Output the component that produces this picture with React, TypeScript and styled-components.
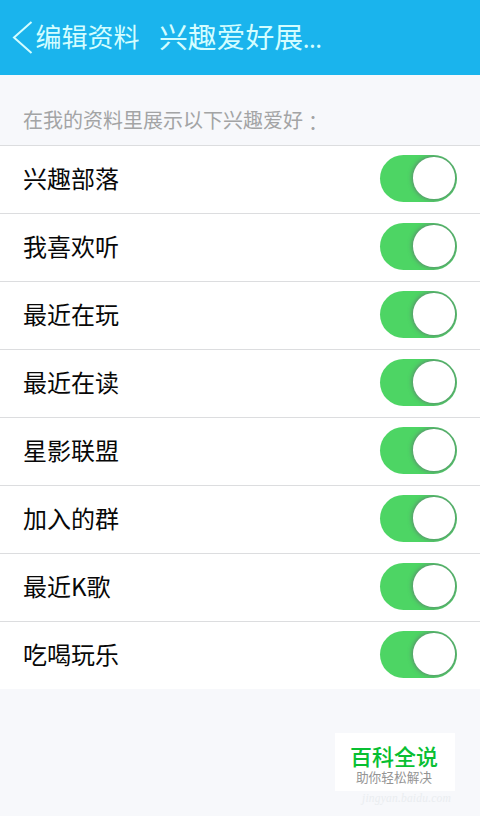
import React, { useState } from "react";
import styled, { createGlobalStyle } from "styled-components";

const GlobalStyle = createGlobalStyle`
  * { box-sizing: border-box; }
  body {
    margin: 0;
    background: #f7f8fb;
    font-family: "Noto Sans CJK SC", "Noto Sans", sans-serif;
  }
`;

const Page = styled.div`
  display: flex;
  flex-direction: column;
  width: 100%;
  height: 816px;
  overflow: hidden;
  background: #f7f8fb;
`;

const Header = styled.header`
  display: flex;
  align-items: center;
  flex: none;
  height: 75px;
  padding-left: 12px;
  background: #1ab4ed;
  color: #d3fdff;
  white-space: nowrap;
`;

const BackButton = styled.button`
  display: flex;
  align-items: center;
  gap: 2.5px;
  width: 147px;
  padding: 0;
  border: 0;
  background: none;
  color: inherit;
  font: 400 26px/40px "Noto Sans CJK SC", sans-serif;

  svg { flex: none; }
`;

const BackLabel = styled.span`
  padding-bottom: 4px;
  line-height: 36px;
`;

const Title = styled.h1`
  margin: 0;
  font-size: 28.8px;
  font-weight: 400;
  line-height: 40px;
`;

const Dots = styled.span`
  font-family: "Noto Sans", sans-serif;
  font-size: 23px;
  font-weight: 500;
`;

const SectionLabel = styled.h2`
  flex: none;
  height: 70px;
  margin: 0;
  padding: 30px 23px 0;
  color: #a3a4a5;
  font-size: 20px;
  font-weight: 400;
  line-height: 30px;
`;

const Colon = styled.span`
  display: inline-block;
  font-family: "Noto Sans CJK TC", sans-serif;
  line-height: 20px;
  vertical-align: -3px;
`;

const List = styled.ul`
  flex: none;
  margin: 0;
  padding: 0;
  list-style: none;
  background: #fff;
`;

const Row = styled.li`
  display: flex;
  align-items: center;
  justify-content: space-between;
  height: 68px;
  padding: 0 23px 2px;
  border-top: 1px solid #dcdddf;
  color: #080808;
  font-size: 24px;
  font-weight: 400;
  line-height: 36px;
`;

const RowName = styled.span`
  padding-bottom: 2px;
`;

const Track = styled.button<{ $on: boolean }>`
  display: flex;
  justify-content: ${(p) => (p.$on ? "flex-end" : "flex-start")};
  align-items: center;
  width: 77px;
  height: 47px;
  margin-bottom: 1px;
  padding: 0 2.5px;
  border: 0;
  border-radius: 24px;
  overflow: hidden;
  background: ${(p) => (p.$on ? "#4dd564" : "#dddddd")};
`;

const Knob = styled.span`
  width: 41.5px;
  height: 41.5px;
  border-radius: 50%;
  background: #fff;
  box-shadow: 0 0 4px 1px rgba(105, 85, 120, 0.6);
`;

const Footer = styled.footer`
  display: flex;
  flex-direction: column;
  align-items: flex-end;
  padding: 44px 25px 0 0;
`;

const Badge = styled.div`
  display: flex;
  flex-direction: column;
  align-items: center;
  width: 120px;
  height: 58px;
  padding: 7px 2px 0 0;
  background: #fff;
`;

const BadgeName = styled.strong`
  color: #08bf32;
  font-size: 22px;
  font-weight: 500;
  line-height: 30px;
`;

const BadgeSlogan = styled.span`
  margin-top: -2px;
  color: #949494;
  font-size: 12.7px;
  line-height: 18px;
`;

const Watermark = styled.span`
  margin: -1px 4px 0 0;
  color: #eaedf0;
  font: italic 11.5px/16px "Liberation Serif", serif;
  letter-spacing: 0.2px;
`;

const interests = [
  "兴趣部落",
  "我喜欢听",
  "最近在玩",
  "最近在读",
  "星影联盟",
  "加入的群",
  "最近K歌",
  "吃喝玩乐",
];

function InterestRow({ name }: { name: string }) {
  const [on, setOn] = useState(true);
  return (
    <Row>
      <RowName>{name}</RowName>
      <Track $on={on} role="switch" aria-checked={on} aria-label={name} onClick={() => setOn(!on)}>
        <Knob />
      </Track>
    </Row>
  );
}

export default function App() {
  return (
    <Page>
      <GlobalStyle />
      <Header>
        <BackButton>
          <svg width="21" height="34" viewBox="0 0 21 34" fill="none" stroke="currentColor" strokeWidth="2">
            <path d="M19.5 1 2 16.5 19.5 32" />
          </svg>
          <BackLabel>编辑资料</BackLabel>
        </BackButton>
        <Title>
          兴趣爱好展<Dots>...</Dots>
        </Title>
      </Header>
      <SectionLabel>
        在我的资料里展示以下兴趣爱好<Colon lang="zh-TW">：</Colon>
      </SectionLabel>
      <List>
        {interests.map((name) => (
          <InterestRow key={name} name={name} />
        ))}
      </List>
      <Footer>
        <Badge>
          <BadgeName>百科全说</BadgeName>
          <BadgeSlogan>助你轻松解决</BadgeSlogan>
        </Badge>
        <Watermark>jingyan.baidu.com</Watermark>
      </Footer>
    </Page>
  );
}
